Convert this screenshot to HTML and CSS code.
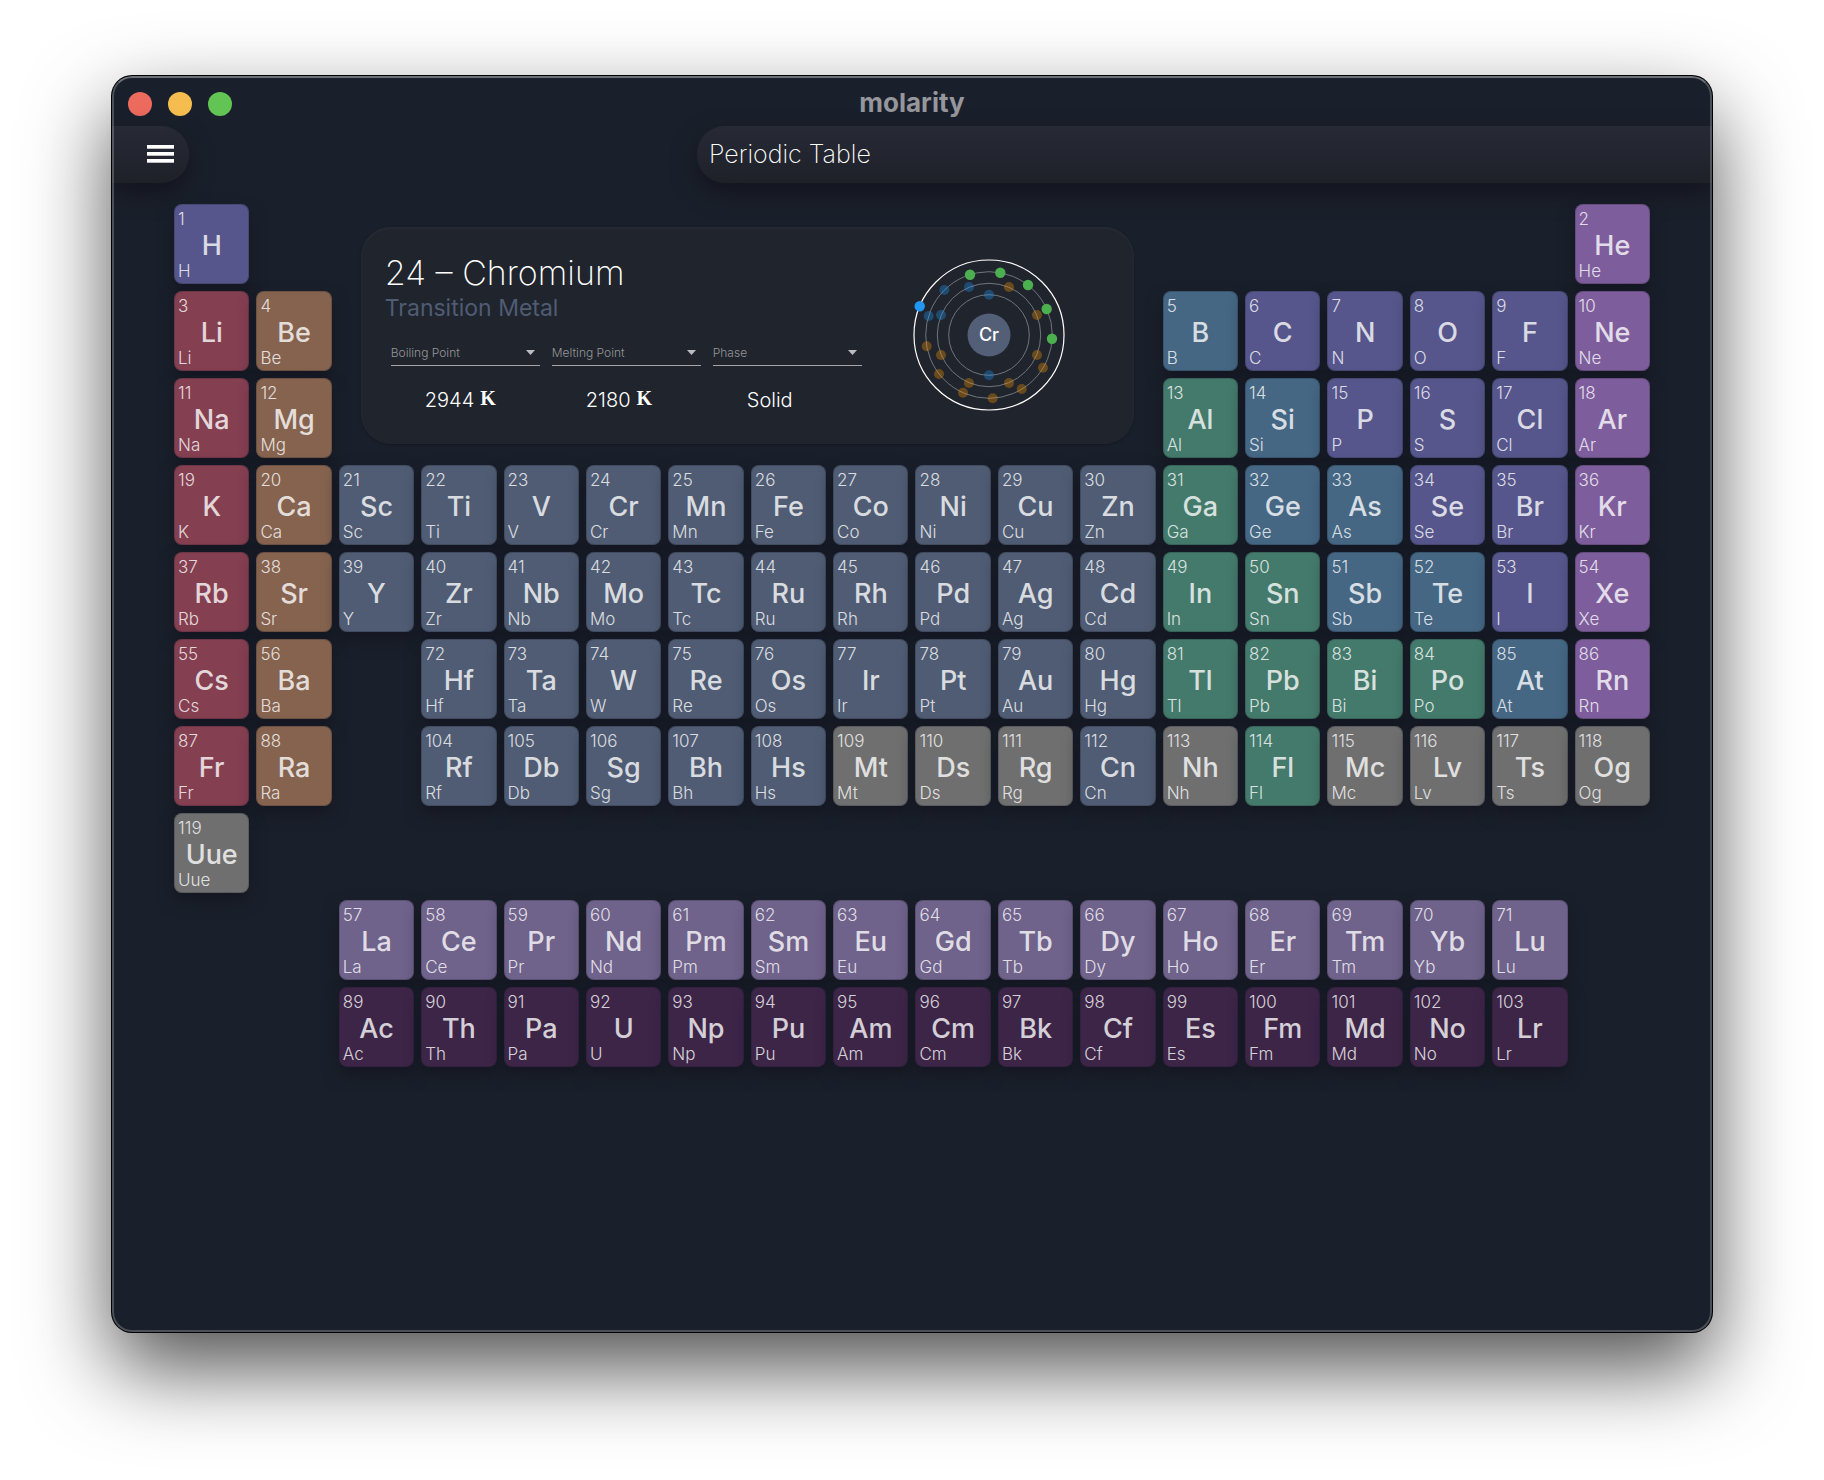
FILE: index.html
```html
<!DOCTYPE html>
<html lang="en">
<head>
<meta charset="utf-8">
<meta name="viewport" content="width=device-width, initial-scale=1">
<title>molarity</title>
<link rel="stylesheet" href="styles.css">
</head>
<body>
<div class="window">
  <header class="titlebar">
    <div class="lights">
      <button class="light light-close" aria-label="Close"></button>
      <button class="light light-minimize" aria-label="Minimize"></button>
      <button class="light light-zoom" aria-label="Zoom"></button>
    </div>
    <span class="app-name">molarity</span>
  </header>

  <nav class="toolbar">
    <button class="menu" aria-label="Menu">
      <svg width="27" height="18" viewBox="0 0 27 18" fill="#fff" aria-hidden="true">
        <rect width="27" height="3.7"/><rect y="7" width="27" height="3.7"/><rect y="14" width="27" height="3.7"/>
      </svg>
    </button>
    <h1 class="page-title">Periodic Table</h1>
  </nav>

  <main class="table" id="table">
    <section class="info">
      <div class="details">
        <h2 class="element-name">24 – Chromium</h2>
        <p class="category">Transition Metal</p>
        <div class="facts">
          <div class="fact">
            <select aria-label="First property"><option>Boiling Point</option></select>
            <p class="value">2944 <b class="unit">K</b></p>
          </div>
          <div class="fact">
            <select aria-label="Second property"><option>Melting Point</option></select>
            <p class="value">2180 <b class="unit">K</b></p>
          </div>
          <div class="fact">
            <select aria-label="Third property"><option>Phase</option></select>
            <p class="value">Solid</p>
          </div>
        </div>
      </div>
      <svg class="atom" width="152" height="152" viewBox="-76 -76 152 152" role="img" aria-label="Electron shells of Cr">
        <g fill="none" stroke="#72757b">
          <circle r="40.3"/><circle r="51.7"/><circle r="63.3"/>
          <circle r="75" stroke="#fff" stroke-width="1.2"/>
        </g>
        <g fill="#2196f3" fill-opacity=".35">
          <circle cx="0" cy="-40.3" r="5"/><circle cx="0" cy="40.3" r="5"/>
          <circle cx="-20" cy="-48" r="5"/><circle cx="-48" cy="-20" r="5"/>
          <circle cx="-60.3" cy="-19" r="5"/><circle cx="-44.7" cy="-45" r="5"/>
        </g>
        <g fill="#ff9800" fill-opacity=".33">
          <circle cx="20" cy="-48" r="5"/><circle cx="48" cy="-20" r="5"/>
          <circle cx="48" cy="20" r="5"/><circle cx="20" cy="48" r="5"/>
          <circle cx="-20" cy="48" r="5"/><circle cx="-48" cy="20" r="5"/>
          <circle cx="54" cy="32.7" r="5"/><circle cx="32.7" cy="54" r="5"/>
          <circle cx="3.7" cy="63.3" r="5"/><circle cx="-26" cy="57.7" r="5"/>
          <circle cx="-50" cy="39" r="5"/><circle cx="-62.3" cy="11.3" r="5"/>
        </g>
        <g fill="#4caf50">
          <circle cx="-19" cy="-60.3" r="5.2"/><circle cx="11.3" cy="-62.3" r="5.2"/>
          <circle cx="39" cy="-50" r="5.2"/><circle cx="57.7" cy="-26" r="5.2"/>
          <circle cx="63" cy="3.7" r="5.2"/>
        </g>
        <circle cx="-69.3" cy="-28.7" r="5.2" fill="#2196f3"/>
        <circle r="21.5" fill="#525f76"/>
        <text class="nucleus" y="6" text-anchor="middle">Cr</text>
      </svg>
    </section>
  </main>
</div>
<script src="script.js"></script>
</body>
</html>
```

FILE: styles.css
```css
* {
  box-sizing: border-box;
}

body {
  margin: 0;
  min-height: 100vh;
  padding: 76px 112px 148px;
  display: flex;
  background: #fff;
  color: #fff;
  font-family: Inter, "Liberation Sans", sans-serif;
}

h1, h2, p {
  margin: 0;
  font-weight: 300;
}

button, select {
  margin: 0;
  padding: 0;
  border: 0;
  color: inherit;
  font-family: inherit;
}

.window {
  position: relative;
  flex: 1;
  overflow: hidden;
  border-radius: 20px;
  background: #1a202b;
  box-shadow: 0 0 0 1px #000, 0 36px 84px rgba(0, 0, 0, .69);
}

/* Light rim over the window's content */
.window::after {
  content: "";
  position: absolute;
  inset: 0;
  border: 2px solid rgba(255, 255, 255, .22);
  border-top-color: rgba(255, 255, 255, .36);
  border-radius: 20px;
  pointer-events: none;
}

.titlebar {
  display: grid;
  grid-template-columns: 1fr auto 1fr;
  align-items: center;
  height: 50px;
  padding: 6px 16px 0;
}

.lights {
  display: flex;
  gap: 16px;
}

.light {
  width: 24px;
  height: 24px;
  border-radius: 50%;
}

.light-close { background: #ed6a5e; }
.light-minimize { background: #f5bd4f; }
.light-zoom { background: #61c454; }

.app-name {
  margin-top: -2px;
  color: #96979d;
  font-size: 26px;
  font-weight: 700;
  line-height: 32px;
}

.toolbar {
  display: flex;
  justify-content: space-between;
  height: 57px;
}

.menu, .page-title {
  background: linear-gradient(#262a35, #1f2129);
  box-shadow: 0 10px 24px rgba(17, 17, 27, .8);
}

.menu {
  display: flex;
  align-items: center;
  justify-content: flex-end;
  width: 77px;
  padding: 0 15px 1px 0;
  border-radius: 0 28px 28px 0;
}

.page-title {
  width: calc(100% - 585px);
  padding-left: 12px;
  border-radius: 28px 0 0 28px;
  font-size: 25px;
  font-weight: 200;
  line-height: 56px;
}

.table {
  display: grid;
  grid-template-columns: repeat(18, 1fr);
  grid-auto-rows: 80px;
  gap: 7px;
  padding: 21px 62px 60px;
}

.info {
  grid-area: 1 / 3 / 4 / 13;
  display: flex;
  justify-content: space-between;
  margin: 23px 22px 14px;
  padding: 24px 69px 0 24px;
  border-radius: 30px;
  background: #20242c;
  box-shadow: inset 0 1px 3px rgba(60, 64, 78, .4), 0 1px 3px rgba(0, 0, 0, .3);
}

.element-name {
  font-size: 34px;
  font-weight: 200;
  line-height: 44px;
}

.category {
  color: #4f5c74;
  font-size: 23px;
  font-weight: 400;
  line-height: 26px;
}

.facts {
  display: flex;
  gap: 12px;
  margin: 19px 0 0 6px;
}

.fact {
  width: 149px;
}

.fact select {
  width: 100%;
  height: 26px;
  border-bottom: 1px solid #a3a5a9;
  border-radius: 0;
  appearance: none;
  background: url("data:image/svg+xml,%3Csvg xmlns='http://www.w3.org/2000/svg' width='9' height='5'%3E%3Cpath d='M0 0h9L4.500 5z' fill='%23bcbdc0'/%3E%3C/svg%3E") no-repeat right 5px center;
  color: #94969a;
  font-size: 12px;
  font-weight: 300;
}

.value {
  display: flex;
  gap: 6px;
  padding: 21px 0 0 34px;
  font-size: 20px;
  line-height: 26px;
}

.unit {
  font-family: "Liberation Serif", serif;
  font-weight: 700;
  line-height: 22px;
}

.atom {
  margin-top: 8px;
}

.nucleus {
  fill: #fff;
  font-size: 18px;
  font-weight: 500;
}

.cell {
  display: grid;
  grid-template-rows: 21px 32px 19px;
  padding: 5px 4px 3px;
  border: 0;
  border-radius: 8px;
  color: rgba(255, 255, 255, .8);
  text-align: left;
  box-shadow: inset 0 0 0 1px rgba(20, 22, 34, .22), 0 8px 16px rgba(17, 17, 27, .6);
}

.number, .name {
  font-size: 17px;
  font-weight: 300;
  line-height: 20px;
}

.name {
  align-self: end;
}

.symbol {
  justify-self: center;
  font-size: 27px;
  font-weight: 500;
  line-height: 32px;
}

.alkali { background: #843f51; }
.alkaline { background: #85634f; }
.transition { background: #4f5c73; }
.post-transition { background: #447a6b; }
.metalloid { background: #456784; }
.nonmetal { background: #56568c; }
.noble { background: #7e5d9c; }
.lanthanide { background: #6f628b; }
.actinide { background: #3d2548; }
.unknown { background: #6f6f6f; }
```

FILE: script.js
```js
// Each run: grid row, first column, first atomic number, category, symbols
const runs = [
  [1, 1, 1, "nonmetal", "H"],
  [1, 18, 2, "noble", "He"],
  [2, 1, 3, "alkali", "Li"],
  [2, 2, 4, "alkaline", "Be"],
  [2, 13, 5, "metalloid", "B"],
  [2, 14, 6, "nonmetal", "C N O F"],
  [2, 18, 10, "noble", "Ne"],
  [3, 1, 11, "alkali", "Na"],
  [3, 2, 12, "alkaline", "Mg"],
  [3, 13, 13, "post-transition", "Al"],
  [3, 14, 14, "metalloid", "Si"],
  [3, 15, 15, "nonmetal", "P S Cl"],
  [3, 18, 18, "noble", "Ar"],
  [4, 1, 19, "alkali", "K"],
  [4, 2, 20, "alkaline", "Ca"],
  [4, 3, 21, "transition", "Sc Ti V Cr Mn Fe Co Ni Cu Zn"],
  [4, 13, 31, "post-transition", "Ga"],
  [4, 14, 32, "metalloid", "Ge As"],
  [4, 16, 34, "nonmetal", "Se Br"],
  [4, 18, 36, "noble", "Kr"],
  [5, 1, 37, "alkali", "Rb"],
  [5, 2, 38, "alkaline", "Sr"],
  [5, 3, 39, "transition", "Y Zr Nb Mo Tc Ru Rh Pd Ag Cd"],
  [5, 13, 49, "post-transition", "In Sn"],
  [5, 15, 51, "metalloid", "Sb Te"],
  [5, 17, 53, "nonmetal", "I"],
  [5, 18, 54, "noble", "Xe"],
  [6, 1, 55, "alkali", "Cs"],
  [6, 2, 56, "alkaline", "Ba"],
  [6, 4, 72, "transition", "Hf Ta W Re Os Ir Pt Au Hg"],
  [6, 13, 81, "post-transition", "Tl Pb Bi Po"],
  [6, 17, 85, "metalloid", "At"],
  [6, 18, 86, "noble", "Rn"],
  [7, 1, 87, "alkali", "Fr"],
  [7, 2, 88, "alkaline", "Ra"],
  [7, 4, 104, "transition", "Rf Db Sg Bh Hs"],
  [7, 9, 109, "unknown", "Mt Ds Rg"],
  [7, 12, 112, "transition", "Cn"],
  [7, 13, 113, "unknown", "Nh"],
  [7, 14, 114, "post-transition", "Fl"],
  [7, 15, 115, "unknown", "Mc Lv Ts Og"],
  [8, 1, 119, "unknown", "Uue"],
  [9, 3, 57, "lanthanide", "La Ce Pr Nd Pm Sm Eu Gd Tb Dy Ho Er Tm Yb Lu"],
  [10, 3, 89, "actinide", "Ac Th Pa U Np Pu Am Cm Bk Cf Es Fm Md No Lr"]
];

const table = document.getElementById("table");

for (const [row, column, first, category, symbols] of runs) {
  symbols.split(" ").forEach((symbol, i) => {
    const cell = document.createElement("button");
    cell.className = "cell " + category;
    cell.style.gridArea = row + " / " + (column + i);
    for (const [part, text] of [["number", first + i], ["symbol", symbol], ["name", symbol]]) {
      const span = document.createElement("span");
      span.className = part;
      span.textContent = text;
      cell.append(span);
    }
    table.append(cell);
  });
}
```
